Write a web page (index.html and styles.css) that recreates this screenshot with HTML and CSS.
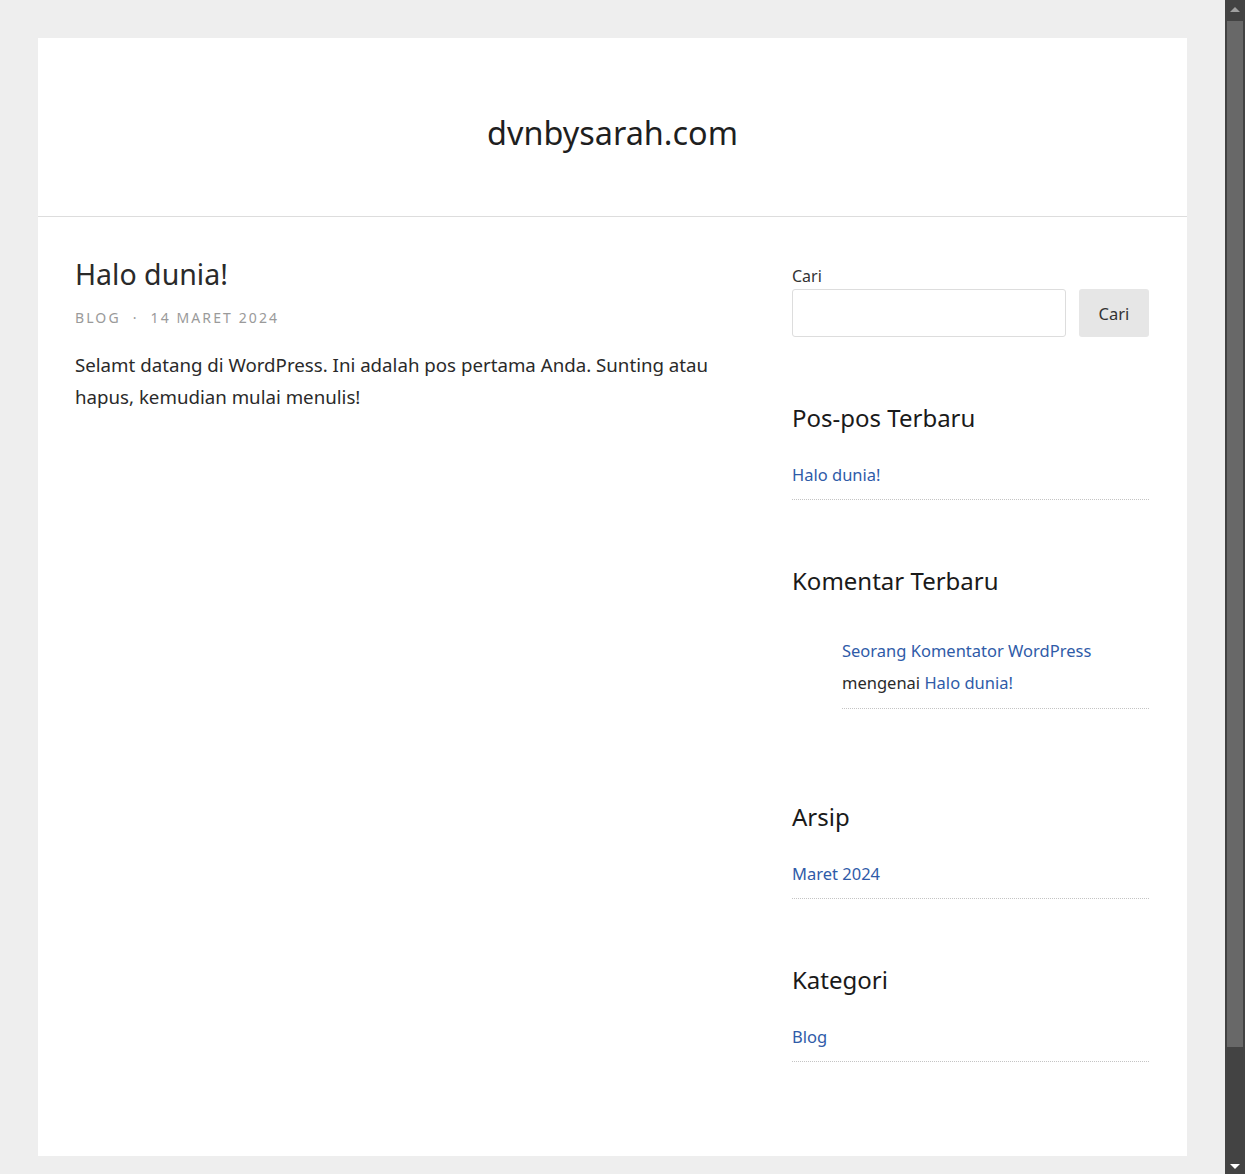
FILE: index.html
```html
<!DOCTYPE html>
<html lang="id">
<head>
<meta charset="utf-8">
<title>dvnbysarah.com</title>
<link rel="stylesheet" href="styles.css">
</head>
<body>
<div class="viewport">
  <div class="site">
    <header class="site-header">
      <h1 class="site-title"><a href="#">dvnbysarah.com</a></h1>
    </header>
    <div class="site-content">
      <main class="main">
        <article class="post">
          <h2 class="post-title"><a href="#">Halo dunia!</a></h2>
          <div class="post-meta">
            <a href="#">Blog</a><span class="sep">·</span><a href="#">14 Maret 2024</a>
          </div>
          <div class="post-body">
            <p>Selamt datang di WordPress. Ini adalah pos pertama Anda. Sunting atau hapus, kemudian mulai menulis!</p>
          </div>
        </article>
      </main>
      <aside class="sidebar">
        <section class="widget search-widget">
          <label class="search-label" for="s">Cari</label>
          <form class="search-form">
            <input id="s" class="search-input" type="search">
            <button class="search-button" type="button">Cari</button>
          </form>
        </section>
        <section class="widget">
          <h2 class="widget-title">Pos-pos Terbaru</h2>
          <ul class="widget-list">
            <li><a href="#">Halo dunia!</a></li>
          </ul>
        </section>
        <section class="widget widget-comments">
          <h2 class="widget-title">Komentar Terbaru</h2>
          <ul class="widget-list comments-list">
            <li><a href="#">Seorang Komentator WordPress</a> mengenai <a href="#">Halo dunia!</a></li>
          </ul>
        </section>
        <section class="widget">
          <h2 class="widget-title">Arsip</h2>
          <ul class="widget-list">
            <li><a href="#">Maret 2024</a></li>
          </ul>
        </section>
        <section class="widget">
          <h2 class="widget-title">Kategori</h2>
          <ul class="widget-list">
            <li><a href="#">Blog</a></li>
          </ul>
        </section>
      </aside>
    </div>
  </div>
  <footer class="site-footer"></footer>
</div>
<div class="scrollbar" aria-hidden="true">
  <div class="sb-btn"><span class="arrow-up"></span></div>
  <div class="sb-track"><div class="sb-thumb"></div></div>
  <div class="sb-btn"><span class="arrow-down"></span></div>
</div>
</body>
</html>
```

FILE: styles.css
```css
html, body {
  height: 100%;
}
body {
  margin: 0;
  display: flex;
  overflow: hidden;
  background: #eeeeee;
  font-family: "Noto Sans", "Open Sans", sans-serif;
  color: #2a2a2a;
  font-size: 18px;
}
a {
  text-decoration: none;
}
.viewport {
  flex: 1;
  min-width: 0;
  overflow: hidden;
  padding: 38px 38px 0;
}
.site {
  background: #ffffff;
}
.site-header {
  border-bottom: 1px solid #dddddd;
  padding: 69px 0 59px;
  text-align: center;
}
.site-title {
  margin: 0;
  font-size: 32.4px;
  font-weight: 400;
  line-height: 50px;
}
.site-title a {
  color: #1f1f1f;
}
.site-content {
  display: grid;
  grid-template-columns: 665px 357px;
  column-gap: 52px;
  padding: 38px 38px 94px 37px;
}
.post-title {
  margin: 0;
  font-size: 28.5px;
  font-weight: 400;
  line-height: 39px;
}
.post-title a {
  color: #2a2a2a;
}
.post-meta {
  margin-top: 14px;
  font-size: 14px;
  line-height: 20px;
  letter-spacing: 0.15em;
  text-transform: uppercase;
}
.post-meta a {
  color: #9a9a9a;
}
.post-meta .sep {
  color: #9a9a9a;
  margin: 0 12px;
}
.post-body p {
  margin: 21px 0 0;
  font-size: 18.7px;
  line-height: 32px;
}
.sidebar {
  padding-top: 9px;
}
.widget {
  margin-top: 65px;
}
.widget:first-child {
  margin-top: 0;
}
.search-label {
  display: block;
  font-size: 16px;
  line-height: 24px;
  color: #333333;
}
.search-form {
  display: flex;
  gap: 13px;
  margin-top: 1px;
}
.search-input {
  flex: 1;
  min-width: 0;
  height: 48px;
  box-sizing: border-box;
  border: 1px solid #dddddd;
  border-radius: 3px;
  margin: 0;
  padding: 0 12px;
  font: inherit;
}
.search-button {
  flex: none;
  width: 70px;
  height: 48px;
  border: 0;
  border-radius: 3px;
  background: #e6e6e6;
  color: #333333;
  font: inherit;
  font-size: 16.5px;
  padding: 0;
}
.widget-title {
  margin: 0;
  font-size: 24px;
  font-weight: 400;
  line-height: 32px;
  color: #1a1a1a;
}
.widget-list {
  list-style: none;
  margin: 25px 0 0;
  padding: 0;
  font-size: 16.5px;
}
.widget-list li {
  line-height: 32px;
  padding-bottom: 8px;
  border-bottom: 1px dotted #c4c4c4;
}
.widget-list a {
  color: #2f5ba8;
}
.widget-comments {
  padding-bottom: 27px;
}
.comments-list {
  margin-top: 38px;
  padding-left: 50px;
}
.comments-list li {
  padding-bottom: 9px;
}
.site-footer {
  height: 103px;
}
.scrollbar {
  flex: none;
  width: 20px;
  display: flex;
  flex-direction: column;
  background: #434343;
}
.sb-btn {
  flex: none;
  height: 20px;
  display: flex;
  align-items: center;
  justify-content: center;
}
.arrow-up {
  width: 0;
  height: 0;
  border-left: 5px solid transparent;
  border-right: 5px solid transparent;
  border-bottom: 5px solid #a0a0a0;
  margin-top: -2px;
}
.arrow-down {
  width: 0;
  height: 0;
  border-left: 5px solid transparent;
  border-right: 5px solid transparent;
  border-top: 5px solid #ffffff;
  margin-top: 4px;
}
.sb-track {
  flex: 1;
  padding: 1px 2px 0 2px;
}
.sb-thumb {
  height: 1026px;
  background: #686868;
}
```
